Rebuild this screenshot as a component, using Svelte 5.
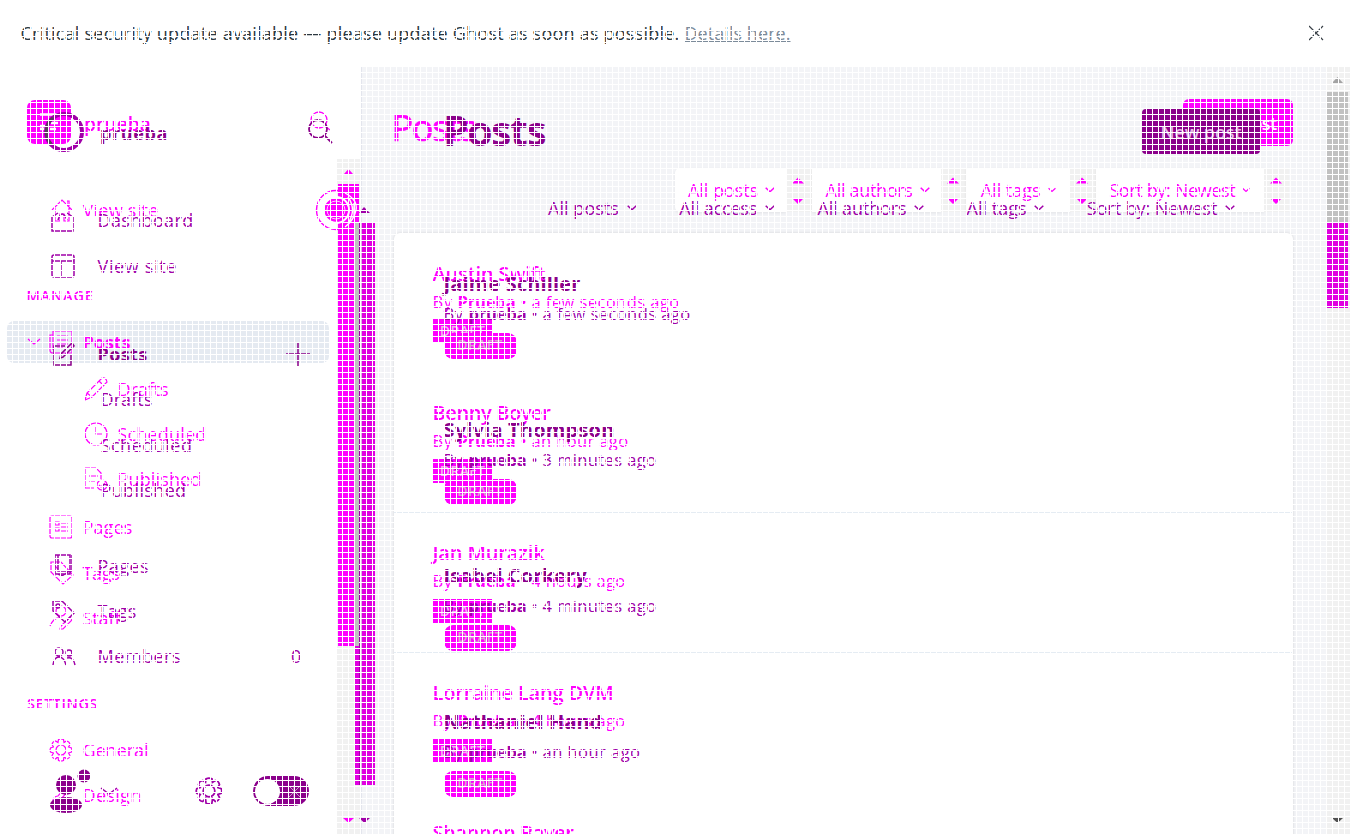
<script>
  const oldNav = [
    { t: 'View site', gap: 0, x: 82.5, w: 76, icon: 'house', ix: 50 },
    { t: 'MANAGE', gap: 42, x: 26.5, w: 67, head: true },
    { t: 'Posts', gap: 2, x: 82.5, w: 48, icon: 'doc', ix: 49, bold: true, open: true },
    { t: 'Drafts', gap: 3, x: 117.5, w: 51, icon: 'pencil', ix: 84 },
    { t: 'Scheduled', gap: 1, x: 117.5, w: 89, icon: 'clock', ix: 84 },
    { t: 'Published', gap: 1, x: 117.5, w: 84, icon: 'published', ix: 84 },
    { t: 'Pages', gap: 4, x: 82.5, w: 50, icon: 'page', ix: 49 },
    { t: 'Tags', gap: 2, x: 82.5, w: 37, icon: 'tag', ix: 50 },
    { t: 'Staff', gap: 1, x: 82.5, w: 38, icon: 'staff', ix: 49 },
    { t: 'SETTINGS', gap: 42, x: 27, w: 71, head: true },
    { t: 'General', gap: 2, x: 82.5, w: 66, icon: 'gear', ix: 49 },
    { t: 'Design', gap: 1, x: 82.5, w: 59, icon: 'brush', ix: 49 }
  ];
  const newNav = [
    { t: 'Dashboard', gap: 0, x: 97.5, w: 96, icon: 'home', ix: 51 },
    { t: 'View site', gap: 2, x: 97.5, w: 79.5, icon: 'layout', ix: 51 },
    { t: 'Posts', gap: 44, x: 97.5, w: 50, icon: 'edit', ix: 51, bold: true, plus: true },
    { t: 'Drafts', gap: 1, x: 100.5, w: 52 },
    { t: 'Scheduled', gap: 2, x: 100.5, w: 92 },
    { t: 'Published', gap: 1, x: 100.5, w: 86 },
    { t: 'Pages', gap: 32, x: 97.5, w: 51.5, icon: 'sheets', ix: 52 },
    { t: 'Tags', gap: 1, x: 97.5, w: 39, icon: 'label', ix: 51 },
    { t: 'Members', gap: 1, x: 97.5, w: 83.5, icon: 'people', ix: 52, count: '0' }
  ];
  const oldFilters = [
    { t: 'All posts', w: 70, box: 111, pad: 13 },
    { t: 'All authors', w: 87, box: 129, pad: 14 },
    { t: 'All tags', w: 60, box: 104, pad: 14.5 },
    { t: 'Sort by: Newest', w: 126, box: 168, pad: 13.5 }
  ];
  const newFilters = [
    { t: 'All posts', w: 71 },
    { t: 'All access', w: 78 },
    { t: 'All authors', w: 89 },
    { t: 'All tags', w: 60 },
    { t: 'Sort by: Newest', w: 130.5 }
  ];
  const oldPosts = [
    { t: 'Austin Swift', w: 113, ago: 'a few seconds ago', aw: 148 },
    { t: 'Benny Boyer', w: 118, ago: 'an hour ago', aw: 97 },
    { t: 'Jan Murazik', w: 112, ago: '4 hours ago', aw: 94 },
    { t: 'Lorraine Lang DVM', w: 181, ago: '4 hours ago', aw: 94 },
    { t: 'Shannon Bayer', w: 141 }
  ];
  const newPosts = [
    { t: 'Jaime Schiller', w: 137, ago: 'a few seconds ago', aw: 148 },
    { t: 'Sylvia Thompson', w: 171, ago: '3 minutes ago', aw: 114 },
    { t: 'Isabel Corkery', w: 143, ago: '4 minutes ago', aw: 114 },
    { t: 'Nathaniel Hand', w: 159, ago: 'an hour ago', aw: 98 }
  ];
  const icons = {
    house: 'M2 12L12 2l10 10M5 10v13h5v-7h4v7h5V10M17 6V3h2v5',
    home: 'M1 9v14h21V9M1 9l6-4M22 9l-6-4M7 12q4-12 9 0',
    layout: 'M3 1h18q2 0 2 2v18q0 2-2 2H3q-2 0-2-2V3q0-2 2-2zM1 7h22M10 7v16',
    doc: 'M4 1h19v22H4q-3 0-3-3V5h3zM4 5v15M8 6h11M8 10h11M8 14h11M8 18h6',
    edit: 'M14 4H3v19h17V12M9 16l1-4L21 1l2 3-11 11z',
    pencil: 'M1 23l2-7L18 1q4-1 5 4L8 20zM15 4l5 5M3 16l5 4',
    clock: 'M12 1a11 11 0 1 0 0 22a11 11 0 1 0 0-22M12 5v7h6',
    published: 'M10 21H1V1h11l5 5v6M5 9h9M5 14h6M13 18a5 5 0 1 0 10 0a5 5 0 1 0-10 0M15 18l2 2 4-4',
    page: 'M3 1h18q2 0 2 2v18q0 2-2 2H3q-2 0-2-2V3q0-2 2-2zM6 7h4v3H6zM12 8h7M12 12h7M6 13h4v3H6zM12 16h7',
    tag: 'M1 1h10l12 13-10 9L1 11zM5 5l3 3',
    staff: 'M7 5a5 5 0 1 0 10 0a5 5 0 1 0-10 0M1 20q4-9 10-8M12 20l9-9 2 3-9 9-3 0z',
    gear: 'M9.500 1.500q2.500-1 5 0l.5 3 2.500-1.500q3 .5 3.500 3.500l-1.500 2.500 3 1q1 2 0 4l-3 1 1.500 2.500q-.5 3-3.500 3.500L15 18.500l-.5 4q-2.500 1-5 0l-.5-4L6.500 21q-3-.5-3.500-3.500L4.500 15l-3-1q-1-2 0-4l3-1L3 6.500Q3.500 3.500 6.500 3L9 4.500zM7 12a5 5 0 1 0 10 0a5 5 0 1 0-10 0',
    brush: 'M3 21q1-8 6-8l9-10 3 3-9 10q0 6-9 5z',
    sheets: 'M3 1h15v19H3zM6 1v16h14V1M6 20l4 2 9-6',
    label: 'M2 2h9l12 12-9 9L2 12zM5 7a2 2 0 1 0 4 0a2 2 0 1 0-4 0',
    people: 'M3 8a4 4 0 1 0 8 0a4 4 0 1 0-8 0M14 9a3 3 0 1 0 6 0a3 3 0 1 0-6 0M1 21q1-8 6-8t7 8M15 14q6-2 8 7'
  };

  function fit(node, width) {
    const gaps = node.textContent.length;
    node.style.letterSpacing = (width - node.getBoundingClientRect().width) / gaps + 'px';
  }
</script>

{#snippet label(t, w, cls)}<span class={cls} use:fit={w}>{t}</span>{/snippet}

{#snippet icon(name, size)}
  <svg class="ico" width={size} height={size} viewBox="0 0 24 24"><path d={icons[name]} /></svg>
{/snippet}

{#snippet chev()}
  <svg class="chev" width="10" height="6" viewBox="0 0 10 6"><path d="M.7.8L5 4.8 9.3.8" /></svg>
{/snippet}

{#snippet nav(items, cls)}
  <nav class={cls}>
    {#each items as n}
      <div class="row" class:bold={n.bold} class:head={n.head} style="margin-top:{n.gap}px">
        <span class="slot" style="width:{n.x}px;padding-left:{n.open ? 28 : n.ix || 0}px">
          {#if n.open}<svg class="open" width="12" height="6"><path d="M0 0l6 5 6-5" /></svg>{/if}
          {#if n.icon}{@render icon(n.icon, 24)}{/if}
        </span>
        {@render label(n.t, n.w, 'nm')}
        {#if n.plus}<svg class="plus" width="24" height="24"><path d="M12 0v24M0 12h24" /></svg>{/if}
        {#if n.count}<span class="count">{n.count}</span>{/if}
      </div>
    {/each}
  </nav>
{/snippet}

{#snippet posts(items, author)}
  {#each items as p}
    <article>
      <h3>{@render label(p.t, p.w, '')}</h3>
      {#if p.ago}
        <p>{@render label('By', 20, '')}<b use:fit={58}>{author}</b><i>•</i>{@render label(p.ago, p.aw, '')}</p>
        <em>DRAFT</em>
      {/if}
    </article>
  {/each}
{/snippet}

<div class="screen">
  <header class="banner">
    <div>{@render label('Critical security update available — please update Ghost as soon as possible.', 659, 'msg')}<a href="#details" use:fit={106}>Details here.</a></div>
    <svg width="16" height="16"><path d="M1 1l14 14M15 1L1 15" /></svg>
  </header>
  <div class="body">
    <aside></aside>
    <main></main>
    <div class="track"></div>
  </div>

  <div class="card"></div>
  <div class="selected"></div>

  <section class="layer old">
    <div class="side">
      <div class="brand">
        <svg width="44" height="44"><rect width="44" height="44" rx="8" /><path d="M13 14.500h18M13 26h8M24 23h7M13 29h6M23 29h6" /></svg>
        {@render label('prueba', 67, 'name')}
        <svg class="find" width="22" height="22"><circle cx="9" cy="9" r="8" /><path d="M15 15l5 4" /></svg>
      </div>
      {@render nav(oldNav, 'nav')}
    </div>
    <div class="content">
      <div class="title"><h1 use:fit={84}>Posts</h1><button>{@render label('New post', 77, '')}</button></div>
      <div class="filters">
        {#each oldFilters as f}
          <div class="box" style="width:{f.box}px;padding-left:{f.pad}px">{@render label(f.t, f.w, '')}{@render chev()}</div>
          <div class="spin"><svg width="12" height="28"><path d="M0 5.500l6-6 6 6zM1 21h10l-5 5z" /></svg></div>
        {/each}
      </div>
      <div class="list">{@render posts(oldPosts, 'Prueba')}</div>
    </div>
  </section>

  <section class="layer new">
    <div class="side">
      <div class="brand">
        <svg width="42" height="42"><circle cx="21" cy="21" r="18" /><path d="M10 6.800A18 18 0 0 0 8 33" /></svg>
        {@render label('prueba', 68, 'name')}
        <svg class="find" width="26" height="26"><circle cx="10" cy="10" r="9" /><path d="M16 16l8 8" /></svg>
      </div>
      {@render nav(newNav, 'nav')}
      <footer>
        <svg class="user" width="40" height="46"><circle cx="16" cy="17" r="10" /><ellipse cx="16" cy="37" rx="16" ry="8" /><circle cx="34" cy="8" r="6.5" /></svg>
        <svg class="caret" width="18" height="8"><path d="M1 1l8 6 8-6" /></svg>
        {@render icon('gear', 28)}
        <span class="toggle"><i></i><svg width="13" height="13"><path d="M1 1l11 11M12 1L1 12M6 0v13" /></svg></span>
      </footer>
    </div>
    <div class="content">
      <div class="title"><h1 use:fit={102}>Posts</h1><button>{@render label('New post', 81, '')}</button></div>
      <div class="filters">
        {#each newFilters as f}
          <div class="box">{@render label(f.t, f.w, '')}{@render chev()}</div>
        {/each}
      </div>
      <div class="list">{@render posts(newPosts, 'prueba')}</div>
    </div>
  </section>

  <svg class="bars" width="1350" height="834">
    <path d="M338 184h21v462h-21z" fill="#f0f" />
    <path d="M359 223h16v562h-16zM355 646h5v139h-5z" fill="#e000e0" />
    <path d="M359.5 223v562" stroke="#a000a8" />
    <path d="M361.500 67v767" stroke="#dfe1ea" stroke-opacity=".8" />
    <path d="M344 174l4.500-5 4.500 5zM343 818h11l-5.500 5z" fill="#f0f" />
    <path d="M359 213l5-6 6 6zM359 818h11l-5.500 5z" fill="#a000a8" />
    <g fill="none" stroke="#f0f" stroke-width="1.400">
      <circle cx="336" cy="210" r="19.500" />
      <circle cx="336" cy="210" r="13" stroke="#fff" stroke-width="2" />
      <path d="M345 193q13 7 11 17t-11 17M348 197q9 13 0 26M354 203v14" stroke="#fff" />
      <circle cx="336" cy="210" r="11" fill="#f0f" />
      <circle cx="336" cy="210" r="9" stroke="#fff" stroke-width=".8" />
    </g>
    <path d="M1327 92h21v131h-21z" fill="#c1c1c1" />
    <path d="M1327 223h21v85h-21z" fill="#e000e0" />
    <path d="M1332 83l5.500-6 5.500 6z" fill="#a3a3a3" />
    <path d="M1332 818h11l-5.500 5z" fill="#505050" />
  </svg>
  <div class="mesh"></div>
  <div class="strip"></div>
</div>

<style>
  :global(body) { margin: 0; background: #fff; }
  .screen { position: relative; width: 1350px; height: 834px; overflow: hidden; font: 18px/24px "Open Sans", "Noto Sans", sans-serif; background: #fff; }
  .screen * { box-sizing: border-box; }
  span, h1, h3, a, b { white-space: nowrap; }
  svg { flex: none; overflow: visible; display: block; fill: none; stroke: currentColor; }
  .banner { height: 67px; display: flex; justify-content: space-between; align-items: center; padding: 0 26px 2px 20.500px; color: #2c3840; }
  .banner svg { stroke: #394047; stroke-width: 1.2; }
  .banner div { display: flex; gap: 5px; }
  .banner a { color: #7c8b9a; }
  .body { display: flex; height: 767px; }
  aside { width: 361px; background: linear-gradient(#f1f1f1, #f1f1f1) 337px 92px / 24px 700px no-repeat; }
  main { flex: 1; background: #f3f4f7; }
  .track { width: 24px; background: #f1f1f1; }
  .card { position: absolute; left: 394px; top: 233px; width: 899px; height: 620px; border-radius: 6px; background: #fff; box-shadow: 0 0 3px #0002; }
  .selected { position: absolute; left: 7px; top: 321px; width: 322px; height: 42px; border-radius: 7px; background: #e5eaf1; }
  .layer { position: absolute; inset: 0; display: flex; }
  .side { width: 361px; height: 834px; flex: none; display: flex; flex-direction: column; }
  .content { flex: 1; min-width: 0; display: flex; flex-direction: column; }
  .old { color: #f0f; }
  .new { color: #a000a8; }
  .brand { display: flex; flex: none; }
  .old .brand { height: 88px; margin-top: 100px; padding-left: 27px; }
  .old .brand rect { fill: #f0f; stroke: none; }
  .old .brand path { stroke: #fff; stroke-width: 2.5; }
  .old .brand .name { margin: 12px 0 0 13px; font-size: 19px; font-weight: 600; }
  .old .find { margin: 11px 0 0 159px; stroke-width: 1.3; }
  .old .brand .find path { stroke: #f0f; stroke-width: 1.3; }
  .new .brand { height: 86.500px; margin-top: 111px; padding-left: 43px; }
  .new .brand circle { stroke-width: 4; }
  .new .brand path { stroke: #55405a; stroke-width: 3; }
  .new .brand .name { margin: 10px 0 0 15px; font-weight: 700; color: #8b008b; }
  .new .find { margin: 8px 0 0 140px; }
  .new .brand .find * { stroke-width: 1.8; stroke: #8b008b; }
  .nav { display: flex; flex-direction: column; flex: none; }
  .row { height: 44px; display: flex; align-items: center; flex: none; }
  .slot { flex: none; display: flex; align-items: center; gap: 9px; }
  .open { stroke-width: 1.3; }
  .ico { stroke-width: 1.2; }
  .bold .nm { font-weight: 700; }
  .head .nm { font-size: 14.500px; font-weight: 600; }
  .new .bold { color: #8b008b; }
  .new .ico { stroke-width: 1.5; }
  .plus { margin-left: 138px; stroke-width: 1.500; }
  .count { margin-left: 110px; }
  footer { display: flex; align-items: center; height: 48px; margin-top: 89.500px; padding-left: 50px; }
  .user { fill: #8b008b; stroke: none; }
  .caret { margin-left: 10px; stroke-width: 1.500; }
  footer .ico { margin-left: 77px; }
  .toggle { margin-left: 30px; width: 56px; height: 30px; border-radius: 15px; background: #8b008b; display: flex; align-items: center; padding: 0 8px 0 2px; justify-content: space-between; }
  .toggle i { width: 25px; height: 25px; border-radius: 50%; background: #fff; }
  .toggle svg { stroke: #c59bc5; }
  .title { display: flex; justify-content: space-between; flex: none; }
  h1, h3, p { margin: 0; }
  button { border: 0; padding: 0; font: inherit; color: #fff; border-radius: 6px; font-weight: 600; }
  .old .title { padding-left: 30.500px; margin: 99px 57px 0 0; height: 69px; }
  .old h1 { font-size: 36px; font-weight: 400; line-height: 58px; -webkit-text-stroke: .7px; }
  .old button { width: 110px; height: 47px; background: #f0f; }
  .new .title { padding-left: 82px; margin: 109px 90px 0 0; height: 87px; }
  .new h1 { font-size: 41px; font-weight: 700; line-height: 43px; color: #8b008b; }
  .new button { width: 118px; height: 45px; border-radius: 4px; background: #8b008b; color: #e5b8e5; }
  .filters { display: flex; flex: none; align-items: center; }
  .old .filters { height: 44px; margin-left: 314px; }
  .box { display: flex; align-items: center; flex: none; gap: 7px; }
  .old .box { height: 44px; background: #fff; box-shadow: 0 1px 3px #0001; }
  .old .box:first-child { border-radius: 5px 0 0 5px; }
  .old .box:nth-last-child(2) .chev, .old .box:nth-last-child(4) .chev { width: 8px; margin-right: 2px; }
  .spin { width: 25.600px; height: 44px; background: #f1f1f1; padding: 10px 0 0 6px; flex: none; }
  .spin svg { fill: #f0f; stroke: none; }
  .chev { stroke-width: 1.500; }
  .new .filters { height: 24px; margin-left: 187px; gap: 42.700px; }
  .new .box { gap: 7.500px; }
  .list { display: flex; flex-direction: column; flex: none; }
  article { display: flex; flex-direction: column; align-items: flex-start; flex: none; }
  .old .list { margin: 21.700px 58px 0 33px; }
  .old article { height: 139.800px; padding: 27px 0 0 38.500px; border-bottom: 1px solid #e5ecf3; }
  .old article:first-child { border-color: transparent; }
  h3 { font-size: 20px; line-height: 26px; font-weight: 600; }
  p { display: flex; font-size: 16.500px; height: 24px; }
  p b { margin-left: 5px; }
  p i { width: 16px; font-style: normal; text-align: center; }
  .old p { margin-top: 3px; }
  em { font: 600 14px/24px "Open Sans", sans-serif; letter-spacing: .3px; text-align: center; }
  .old em { width: 60px; height: 24px; margin-top: 5.500px; background: #f0f; color: #f0b5ed; }
  .new .list { margin: 51px 0 0 82.500px; }
  .new article { height: 146px; }
  .new h3 { font-weight: 700; color: #8b008b; }
  .new p { margin-top: 5px; }
  .new em { width: 73px; height: 26px; margin-top: 7px; border-radius: 9px; background: #f0f; color: #d9a3cf; }
  .bars { position: absolute; inset: 0; stroke: none; }
  .mesh { position: absolute; inset: 0; background: linear-gradient(#fff 1px, transparent 1px) 0 0 / 6px 6px, linear-gradient(90deg, #fff 1px, transparent 1px) 0 0 / 6px 6px; }
  .strip { position: absolute; left: 355px; top: 223px; width: 4px; height: 423px; background: #c1c1c1; }
</style>
